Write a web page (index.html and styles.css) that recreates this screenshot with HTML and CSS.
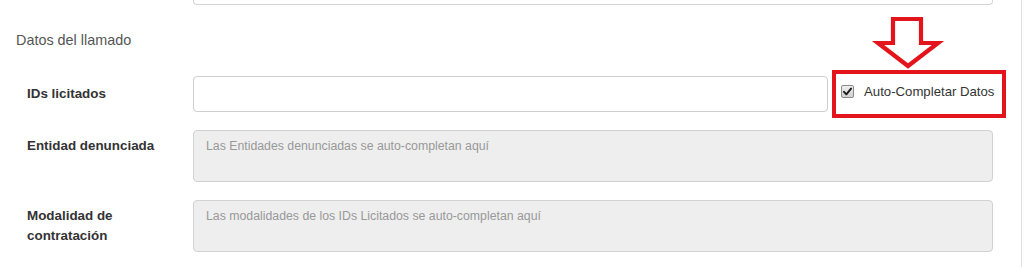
FILE: index.html
```html
<!DOCTYPE html>
<html lang="es">
<head>
<meta charset="utf-8">
<title>Datos del llamado</title>
<link rel="stylesheet" href="styles.css">
</head>
<body>
<div class="panel">
  <div class="prev-field"></div>
  <h3 class="section-title">Datos del llamado</h3>

  <div class="row row-ids">
    <label class="label">IDs licitados</label>
    <div class="input"></div>
    <div class="highlight">
      <span class="checkbox">
        <svg width="9" height="9" viewBox="0 0 9 9"><path d="M1 4.8 L3.4 7.3 L8 1.6" fill="none" stroke="#1a1a1a" stroke-width="1.9" stroke-linejoin="round" stroke-linecap="round"/></svg>
      </span>
      <span class="check-text">Auto-Completar Datos</span>
    </div>
  </div>

  <div class="row row-entity">
    <label class="label label-top">Entidad denunciada</label>
    <div class="textarea">Las Entidades denunciadas se auto-completan aquí</div>
  </div>

  <div class="row">
    <label class="label label-top">Modalidad de<br>contratación</label>
    <div class="textarea">Las modalidades de los IDs Licitados se auto-completan aquí</div>
  </div>

  <svg class="arrow" width="80" height="65" viewBox="0 0 80 65">
    <polygon points="23,9 51,9 51,33 68,33 38,56 8,33 23,33" fill="#fff" stroke="#e3141c" stroke-width="4.2" stroke-linejoin="miter"/>
  </svg>
</div>
</body>
</html>
```
FILE: styles.css
```css
html, body {
  margin: 0;
  padding: 0;
  background: #fff;
}

body {
  font-family: "Liberation Sans", Arial, sans-serif;
  color: #333;
}

.panel {
  position: relative;
  width: 1021px;
  height: 267px;
  border-right: 1px solid #e2e2e2;
  overflow: hidden;
}

.prev-field {
  margin-left: 193px;
  width: 798px;
  height: 4px;
  border: 1px solid #d4d4d4;
  border-top: none;
  border-radius: 0 0 4px 4px;
}

.section-title {
  margin: 25px 0 0 16px;
  font-size: 14.4px;
  font-weight: normal;
  line-height: 20px;
  color: #555;
}

.row {
  display: flex;
  align-items: flex-start;
  margin-top: 18px;
}

.row-ids {
  margin-top: 20px;
  align-items: center;
}

.row-entity {
  margin-top: 12px;
}

.label {
  width: 166px;
  padding-left: 27px;
  font-size: 13.4px;
  font-weight: bold;
  line-height: 19.5px;
  color: #333;
  flex-shrink: 0;
}

.label-top {
  padding-top: 6px;
}

.input {
  width: 633px;
  height: 34px;
  border: 1px solid #cfcfcf;
  border-radius: 4px;
  background: #fff;
}

.highlight {
  box-sizing: border-box;
  margin-left: 4px;
  width: 174px;
  height: 48px;
  border: 4px solid #e3141c;
  display: flex;
  align-items: flex-start;
  padding: 10px 0 0 5px;
}

.checkbox {
  box-sizing: border-box;
  width: 13px;
  height: 13px;
  border: 1px solid #8a8a8a;
  border-radius: 2px;
  background: linear-gradient(#f0f0f0, #cfcfcf);
  display: flex;
  align-items: center;
  justify-content: center;
  margin-top: 1px;
}

.check-text {
  margin-left: 10px;
  font-size: 13.2px;
  line-height: 15px;
  color: #333;
  white-space: nowrap;
}

.textarea {
  box-sizing: border-box;
  width: 800px;
  height: 52px;
  border: 1px solid #d2d2d2;
  border-radius: 4px;
  background: #eeeeee;
  padding: 6px 12px;
  font-size: 12.3px;
  line-height: 18px;
  color: #999;
}

.arrow {
  position: absolute;
  left: 870px;
  top: 10px;
}
```
